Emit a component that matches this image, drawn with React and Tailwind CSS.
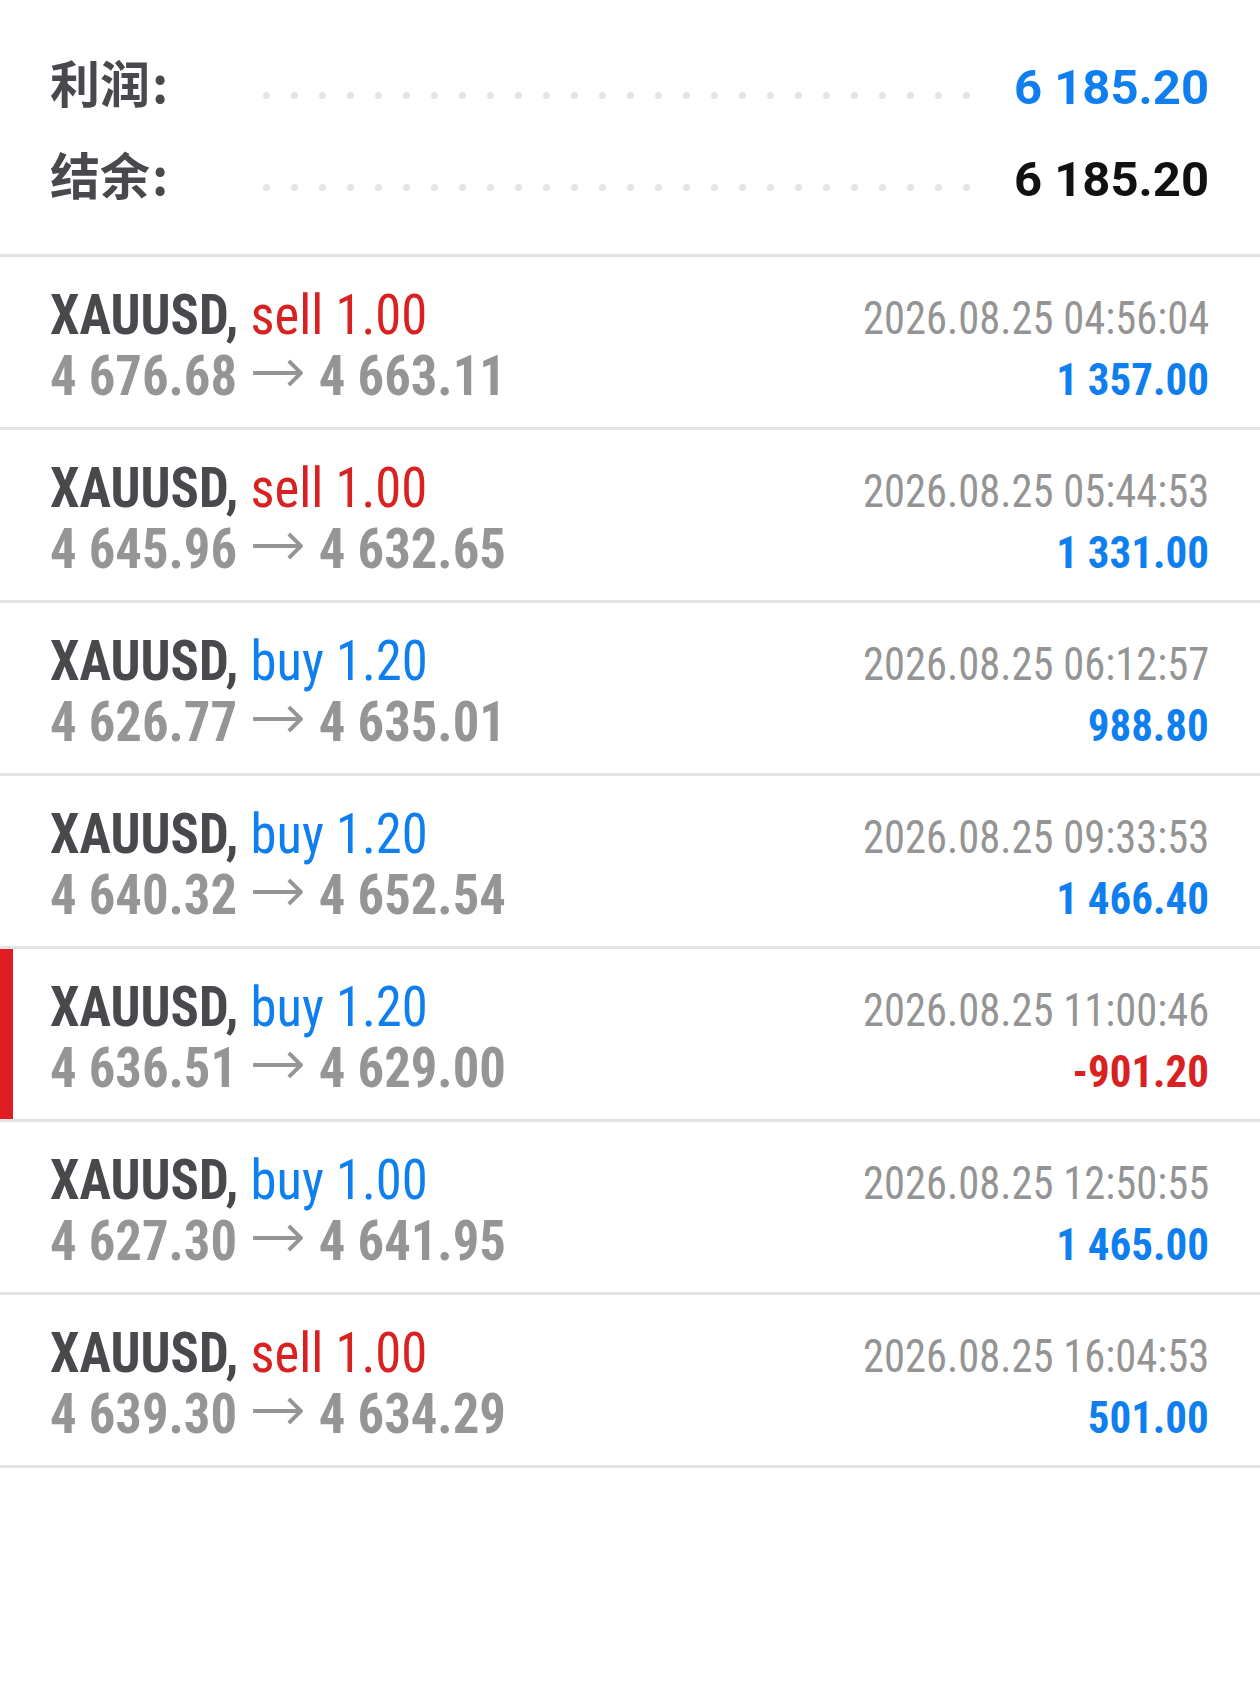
import React from 'react';

const trades = [
    { side: 'sell', vol: '1.00', open: '4 676.68', close: '4 663.11', time: '2026.08.25 04:56:04', profit: '1 357.00' },
    { side: 'sell', vol: '1.00', open: '4 645.96', close: '4 632.65', time: '2026.08.25 05:44:53', profit: '1 331.00' },
    { side: 'buy', vol: '1.20', open: '4 626.77', close: '4 635.01', time: '2026.08.25 06:12:57', profit: '988.80' },
    { side: 'buy', vol: '1.20', open: '4 640.32', close: '4 652.54', time: '2026.08.25 09:33:53', profit: '1 466.40' },
    { side: 'buy', vol: '1.20', open: '4 636.51', close: '4 629.00', time: '2026.08.25 11:00:46', profit: '-901.20', loss: true },
    { side: 'buy', vol: '1.00', open: '4 627.30', close: '4 641.95', time: '2026.08.25 12:50:55', profit: '1 465.00' },
    { side: 'sell', vol: '1.00', open: '4 639.30', close: '4 634.29', time: '2026.08.25 16:04:53', profit: '501.00' },
];

function Dots() {
    return (
        <div className="flex gap-[21px] mt-[17px]">
            {Array.from({ length: 26 }).map((_, i) => (
                <span key={i} className="w-[7px] h-[7px] rounded-full bg-[#e4e4e6]" />
            ))}
        </div>
    );
}

function Arrow() {
    return (
        <svg width="53" height="28" viewBox="0 0 53 28" className="inline-block mx-[17px] align-[8px]">
            <path d="M0 14H50M38 2L51 14L38 26" fill="none" stroke="#959597" strokeWidth="4" />
        </svg>
    );
}

function SummaryRow({ label, value, valueClass }) {
    return (
        <div className="flex items-center h-[92px]">
            <div className="w-[213px] -mt-[12px] text-[50px] font-bold text-[#48484d] font-['Noto_Sans_CJK_SC',sans-serif] leading-none">
                {label}<span className="ml-[2px]">:</span>
            </div>
            <Dots />
            <div className={`ml-auto text-[49px] font-bold leading-none font-['Roboto',sans-serif] whitespace-nowrap ${valueClass}`}>
                {value}
            </div>
        </div>
    );
}

function TradeRow({ t }) {
    const sideColor = t.side === 'sell' ? 'text-[#d92121]' : 'text-[#0f7ff0]';
    return (
        <div className="relative border-b-[3px] border-[#e3e3e3] pl-[50px] pr-[51px] pt-[28px] pb-[20px] font-['Roboto_Condensed','Roboto',sans-serif]">
            {t.loss && <div className="absolute left-0 top-0 bottom-0 w-[13px] bg-[#e11d23]" />}
            <div className="flex items-baseline justify-between h-[61px] leading-[61px] whitespace-nowrap">
                <div className="text-[56px] inline-block origin-left scale-x-[0.94]">
                    <span className="font-bold text-[#48484d]">XAUUSD,</span>{' '}
                    <span className={sideColor}>{t.side} {t.vol}</span>
                </div>
                <div className="text-[46px] text-[#949494] inline-block origin-right scale-x-[0.925]">{t.time}</div>
            </div>
            <div className="flex items-baseline justify-between h-[61px] leading-[61px] whitespace-nowrap">
                <div className="text-[56px] font-bold text-[#959597] inline-block origin-left scale-x-[0.94]">
                    {t.open}<Arrow />{t.close}
                </div>
                <div className={`text-[45px] font-bold inline-block origin-right scale-x-[0.955] ${t.loss ? 'text-[#d92121]' : 'text-[#0f7ff0]'}`}>
                    {t.profit}
                </div>
            </div>
        </div>
    );
}

export default function App() {
    return (
        <div className="w-[1260px] min-h-[1701px] bg-white">
            <div className="pl-[50px] pr-[51px] pt-[41px] pb-[29px] border-b-[3px] border-[#e3e3e3]">
                <SummaryRow label="利润" value="6 185.20" valueClass="text-[#0f7ff0]" />
                <SummaryRow label="结余" value="6 185.20" valueClass="text-[#111111]" />
            </div>
            {trades.map((t, i) => (
                <TradeRow key={i} t={t} />
            ))}
        </div>
    );
}
